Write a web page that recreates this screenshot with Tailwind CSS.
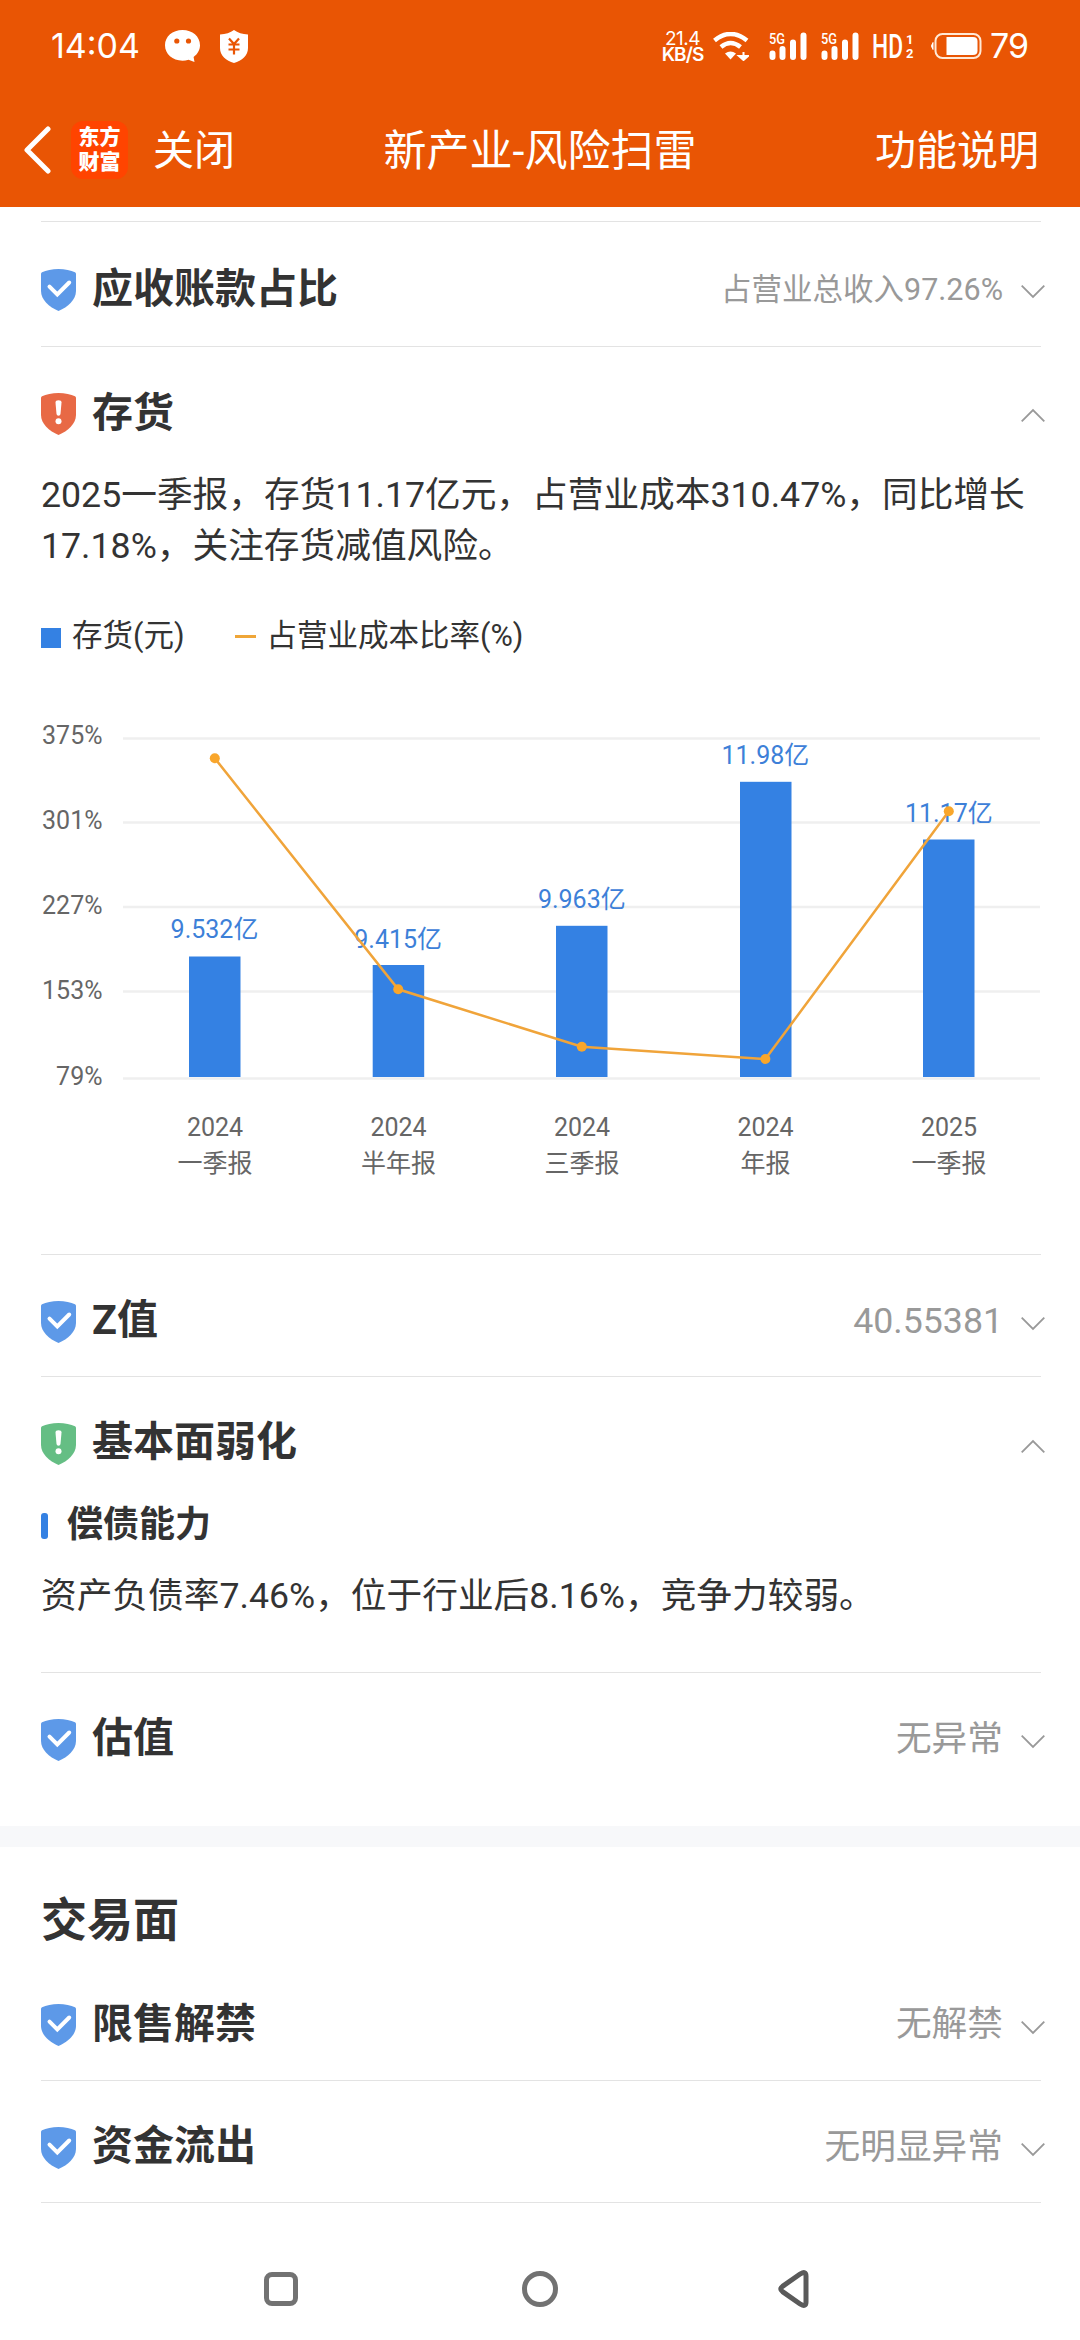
<!DOCTYPE html>
<html lang="zh-CN">
<head>
    <meta charset="UTF-8">
    <meta name="viewport" content="width=device-width, initial-scale=1.0">
    <title>新产业-风险扫雷</title>
    <script src="https://cdn.jsdelivr.net/npm/@tailwindcss/browser@4"></script>
    <style>
        body {
            font-family: Roboto, 'Noto Sans CJK SC', sans-serif;
        }
    </style>
</head>
<body class="bg-white text-[#333] w-[1080px] h-[2340px] overflow-hidden flex flex-col">
    <!-- shared icons -->
    <svg class="hidden">
        <symbol id="shield" viewBox="0 0 35 42">
            <path d="M17.500 0C24 0 30 1.300 34 3.300Q35 3.900 35 5V22C35 30.500 27 38 17.500 42C8 38 0 30.500 0 22V5Q0 3.900 1 3.300C5 1.300 11 0 17.500 0Z" fill="currentColor"/>
        </symbol>
        <symbol id="ok" viewBox="0 0 35 42">
            <use href="#shield"/>
            <path d="M8.500 17.700L16.300 25.500L28.200 13.500" fill="none" stroke="#fff" stroke-width="4" stroke-linecap="round"/>
        </symbol>
        <symbol id="warn" viewBox="0 0 35 42">
            <use href="#shield"/>
            <path d="M14.500 9.500Q14.500 7.300 17.500 7.300Q20.500 7.300 20.500 9.500L19.500 21Q19.300 22.700 17.500 22.700Q15.700 22.700 15.500 21Z" fill="#fff"/>
            <circle cx="17.500" cy="28.300" r="3" fill="#fff"/>
        </symbol>
        <symbol id="down" viewBox="0 0 24 14">
            <path d="M0.700 0.700L12 12L23.300 0.700" fill="none" stroke="#999" stroke-width="1.800"/>
        </symbol>
        <symbol id="up" viewBox="0 0 24 14">
            <path d="M0.700 13.300L12 2L23.300 13.300" fill="none" stroke="#999" stroke-width="1.800"/>
        </symbol>
        <symbol id="signal" viewBox="0 0 38 28">
            <text x="0" y="11.500" font-size="15" font-weight="500" textLength="16" lengthAdjust="spacingAndGlyphs" fill="#fff">5G</text>
            <path d="M3.500 21.500V25M13.500 17V25M24 10.500V25M34.500 3.500V25" stroke="#fff" stroke-width="6" stroke-linecap="round"/>
        </symbol>
    </svg>

    <header class="bg-[#e95504] text-white h-[207px] shrink-0">
        <!-- status bar -->
        <div class="h-[92px] pl-[51px] pr-[52px] flex items-center">
            <span class="w-[114px] text-[34px] leading-none font-['Inter']">14:04</span>
            <svg class="w-[35px] h-[32px]" viewBox="0 0 35 32">
                <path d="M17.500 0C27.500 0 35 6.500 35 15.300C35 20 32.500 24.300 28.600 27L29.500 32L23.500 29.800C21.500 30.400 19.500 30.700 17.500 30.700C7.500 30.700 0 24.100 0 15.300C0 6.500 7.500 0 17.500 0Z" fill="#fff"/>
                <circle cx="11.800" cy="11" r="2.600" fill="#e95504"/>
                <circle cx="23.500" cy="11" r="2.600" fill="#e95504"/>
            </svg>
            <svg class="w-[28px] h-[33px] ml-5" viewBox="0 0 28 33">
                <path d="M14 0Q19.500 4 28 4.600V18C28 25.500 22 30.500 14 33C6 30.500 0 25.500 0 18V4.600Q8.500 4 14 0Z" fill="#fff"/>
                <path d="M9 8.500L14 14L19 8.500M8.500 14.500H19.500M8.500 19.500H19.500M14 14V24.500" fill="none" stroke="#e95504" stroke-width="2.200"/>
            </svg>
            <div class="ml-auto w-[43px] flex flex-col items-center text-[19px] leading-[16px] pt-[2px] font-['Inter']">
                <span class="tracking-tight">21.4</span>
                <span class="font-semibold tracking-tighter">KB/S</span>
            </div>
            <svg class="w-[36px] h-[29px] ml-[9px]" viewBox="0 0 36 29">
                <path d="M1.500 8.500Q17.500 -4.500 34 8.500M8 15Q17.500 7 27.500 15" fill="none" stroke="#fff" stroke-width="4.500"/>
                <path d="M12 21.500Q17.500 17.500 23 21.500L17.500 27.500Z" fill="#fff"/>
                <path d="M30.500 20V27M26 24L30.500 28L35 24Z" fill="#fff" stroke="#fff" stroke-width="2"/>
            </svg>
            <svg class="w-[38px] h-[28px] ml-[20px]"><use href="#signal"/></svg>
            <svg class="w-[38px] h-[28px] ml-[14px]"><use href="#signal"/></svg>
            <svg class="w-[42px] h-[28px] ml-[13px] overflow-visible" viewBox="0 0 42 28" fill="#fff">
                <text x="0" y="26" font-size="33" font-weight="500" textLength="31" lengthAdjust="spacingAndGlyphs">HD</text>
                <text x="34" y="11.500" font-size="13" font-weight="700">1</text>
                <text x="34" y="26" font-size="13" font-weight="700">2</text>
            </svg>
            <svg class="w-[52px] h-[28px] ml-[16px]" viewBox="0 0 52 28">
                <rect x="5.500" y="2" width="45" height="24" rx="7" fill="none" stroke="#ffe9d6" stroke-width="2"/>
                <path d="M3 10.500Q0 14 3 17.500Z" fill="#fff" stroke="#fff"/>
                <path d="M16.500 5H43Q47.500 5 47.500 9V19Q47.500 23 43 23H16.500Z" fill="#fff"/>
            </svg>
            <span class="ml-[8px] w-[38px] text-[34px] leading-none font-['Inter'] tracking-tight">79</span>
        </div>
        <!-- title bar -->
        <div class="h-[115px] grid grid-cols-[1fr_auto_1fr] items-center px-[23px] leading-none">
            <div class="flex items-center">
                <svg class="w-[28px] h-[48px]" viewBox="0 0 28 48">
                    <path d="M25 3L4 24L25 45" fill="none" stroke="#fff" stroke-width="5" stroke-linecap="round" stroke-linejoin="round"/>
                </svg>
                <div class="ml-[20px] w-[57px] h-[58px] rounded-[12px] bg-[#ff4400] flex flex-col items-center justify-center text-[21px] leading-[25px] font-black">
                    <span>东方</span>
                    <span>财富</span>
                </div>
                <span class="ml-[25px] pt-[3px] text-[41px]">关闭</span>
            </div>
            <h1 class="pt-[3px] text-[43px]">新产业-风险扫雷</h1>
            <span class="mr-[18px] pt-[3px] text-[41px] text-right">功能说明</span>
        </div>
    </header>

    <main class="pl-[41px] pr-[39px] pt-[14px]">
        <section class="border-t border-[#e3e3e3] h-[125px] pt-[47px]">
            <div class="h-[42px] flex items-center leading-none">
                <svg class="w-[35px] h-[42px] text-[#5d99e8]"><use href="#ok"/></svg>
                <h2 class="ml-[16px] pb-[2px] text-[41px] font-bold">应收账款占比</h2>
                <span class="ml-auto pt-[1px] text-[30.500px] text-[#999]">占营业总收入97.26%</span>
                <svg class="ml-[18px] -mr-[4px] mt-[4px] w-[24px] h-[14px]"><use href="#down"/></svg>
            </div>
        </section>

        <section class="border-t border-[#e3e3e3] h-[908px] pt-[46px]">
            <div class="h-[42px] flex items-center leading-none">
                <svg class="w-[35px] h-[42px] text-[#e86945]"><use href="#warn"/></svg>
                <h2 class="ml-[16px] pb-[2px] text-[41px] font-bold">存货</h2>
                <svg class="ml-auto -mr-[4px] mt-[2px] w-[24px] h-[14px]"><use href="#up"/></svg>
            </div>
            <p class="mt-[35px] text-[35.700px] leading-[51px]">2025一季报，存货11.17亿元，占营业成本310.47%，同比增长17.18%，关注存货减值风险。</p>
            <div class="mt-[44px] h-[40px] flex items-center text-[30.500px] leading-none">
                <i class="w-[20px] h-[20px] bg-[#3481e3] mt-[4px]"></i>
                <span class="ml-[11px]">存货(元)</span>
                <i class="ml-[50px] w-[21px] h-[3px] bg-[#efa638]"></i>
                <span class="ml-[11px]">占营业成本比率(%)</span>
            </div>
            <!-- chart: y 79%..375%, bars carry the amount -->
            <svg class="mt-[44px] w-[1000px] h-[500px]" viewBox="41 700 1000 500">
                <g stroke="#efefef" stroke-width="2.500">
                    <path d="M123 738.500H1040M123 822.500H1040M123 907H1040M123 991.500H1040M123 1078.500H1040"/>
                </g>
                <g fill="#666" font-size="25" text-anchor="end">
                    <text x="102.500" y="743.500">375%</text>
                    <text x="102.500" y="829">301%</text>
                    <text x="102.500" y="914">227%</text>
                    <text x="102.500" y="999">153%</text>
                    <text x="102.500" y="1084.500">79%</text>
                </g>
                <g fill="#3481e3">
                    <rect x="189" y="956.500" width="51.500" height="120.500"/>
                    <rect x="372.700" y="965" width="51.500" height="112"/>
                    <rect x="556" y="925.800" width="51.500" height="151.200"/>
                    <rect x="740" y="781.800" width="51.500" height="295.200"/>
                    <rect x="923" y="839.500" width="51.500" height="237.500"/>
                </g>
                <g fill="#3d80d8" font-size="25" text-anchor="middle">
                    <text x="214.500" y="938">9.532亿</text>
                    <text x="398.200" y="947.500">9.415亿</text>
                    <text x="581.800" y="908">9.963亿</text>
                    <text x="765.400" y="763.500">11.98亿</text>
                    <text x="948.800" y="822">11.17亿</text>
                </g>
                <path d="M214.800 758.300L398.200 989.300L581.800 1046.700L765.400 1059L948.800 811.300" fill="none" stroke="#f0a43a" stroke-width="2.500"/>
                <g fill="#f9a62b">
                    <circle cx="214.800" cy="758.300" r="5"/>
                    <circle cx="398.200" cy="989.300" r="5"/>
                    <circle cx="581.800" cy="1046.700" r="5"/>
                    <circle cx="765.400" cy="1059" r="5"/>
                    <circle cx="948.800" cy="811.300" r="5"/>
                </g>
                <g fill="#666" font-size="25" text-anchor="middle">
                    <text x="215" y="1136">2024</text>
                    <text x="215" y="1172">一季报</text>
                    <text x="398.500" y="1136">2024</text>
                    <text x="398.500" y="1172">半年报</text>
                    <text x="582" y="1136">2024</text>
                    <text x="582" y="1172">三季报</text>
                    <text x="765.500" y="1136">2024</text>
                    <text x="765.500" y="1172">年报</text>
                    <text x="949" y="1136">2025</text>
                    <text x="949" y="1172">一季报</text>
                </g>
            </svg>
        </section>

        <section class="border-t border-[#e3e3e3] h-[122px] pt-[46px]">
            <div class="h-[42px] flex items-center leading-none">
                <svg class="w-[35px] h-[42px] text-[#5d99e8]"><use href="#ok"/></svg>
                <h2 class="ml-[16px] pb-[3px] text-[41px] font-bold">Z值</h2>
                <span class="ml-auto text-[35.700px] text-[#999]">40.55381</span>
                <svg class="ml-[18px] -mr-[4px] mt-[4px] w-[24px] h-[14px]"><use href="#down"/></svg>
            </div>
        </section>

        <section class="border-t border-[#e3e3e3] h-[296px] pt-[46px]">
            <div class="h-[42px] flex items-center leading-none">
                <svg class="w-[35px] h-[42px] text-[#65be84]"><use href="#warn"/></svg>
                <h2 class="ml-[16px] pb-[3px] text-[41px] font-bold">基本面弱化</h2>
                <svg class="ml-auto -mr-[4px] mt-[4px] w-[24px] h-[14px]"><use href="#up"/></svg>
            </div>
            <div class="mt-[41px] h-[40px] flex items-center leading-none">
                <i class="w-[7px] h-[26px] rounded-[3px] bg-[#3481e3]"></i>
                <h3 class="ml-[19px] pb-[2px] text-[36px] font-bold">偿债能力</h3>
            </div>
            <p class="mt-[25px] text-[35.700px] leading-[51px]">资产负债率7.46%，位于行业后8.16%，竞争力较弱。</p>
        </section>

        <section class="border-t border-[#e3e3e3] h-[154px] pt-[46px]">
            <div class="h-[42px] flex items-center leading-none">
                <svg class="w-[35px] h-[42px] text-[#5d99e8]"><use href="#ok"/></svg>
                <h2 class="ml-[16px] pb-[3px] text-[41px] font-bold">估值</h2>
                <span class="ml-auto text-[35.700px] text-[#999]">无异常</span>
                <svg class="ml-[18px] -mr-[4px] mt-[4px] w-[24px] h-[14px]"><use href="#down"/></svg>
            </div>
        </section>
    </main>

    <div class="h-[21px] shrink-0 bg-[#f7f8fa]"></div>

    <div class="pl-[41px] pr-[39px]">
        <h2 class="h-[157px] pt-[50px] text-[46px] leading-[46px] font-bold">交易面</h2>
        <div class="h-[77px] border-b border-[#e3e3e3]">
            <div class="h-[42px] flex items-center leading-none">
                <svg class="w-[35px] h-[42px] text-[#5d99e8]"><use href="#ok"/></svg>
                <h2 class="ml-[16px] pb-[2px] text-[41px] font-bold">限售解禁</h2>
                <span class="ml-auto text-[35.700px] text-[#999]">无解禁</span>
                <svg class="ml-[18px] -mr-[4px] mt-[5px] w-[24px] h-[14px]"><use href="#down"/></svg>
            </div>
        </div>
        <div class="h-[122px] border-b border-[#e3e3e3] pt-[46px]">
            <div class="h-[42px] flex items-center leading-none">
                <svg class="w-[35px] h-[42px] text-[#5d99e8]"><use href="#ok"/></svg>
                <h2 class="ml-[16px] pb-[3px] text-[41px] font-bold">资金流出</h2>
                <span class="ml-auto text-[35.700px] text-[#999]">无明显异常</span>
                <svg class="ml-[18px] -mr-[4px] mt-[4px] w-[24px] h-[14px]"><use href="#down"/></svg>
            </div>
        </div>
    </div>

    <!-- system navigation -->
    <nav class="mt-[66px] h-[40px] pl-[264px] flex items-center">
        <div class="w-[34px] h-[34px] border-[5px] border-[#727272] rounded-[8px]"></div>
        <div class="ml-[224px] w-[36px] h-[36px] border-[5px] border-[#727272] rounded-full"></div>
        <svg class="ml-[220px] w-[31px] h-[40px]" viewBox="0 0 31 40">
            <path d="M22.500 4.800Q28 1.500 28 7V33Q28 38.500 22.500 35.200L4.500 22.600Q1 20 4.500 17.400Z" fill="none" stroke="#5a5a5a" stroke-width="5" stroke-linejoin="round"/>
        </svg>
    </nav>
</body>
</html>
